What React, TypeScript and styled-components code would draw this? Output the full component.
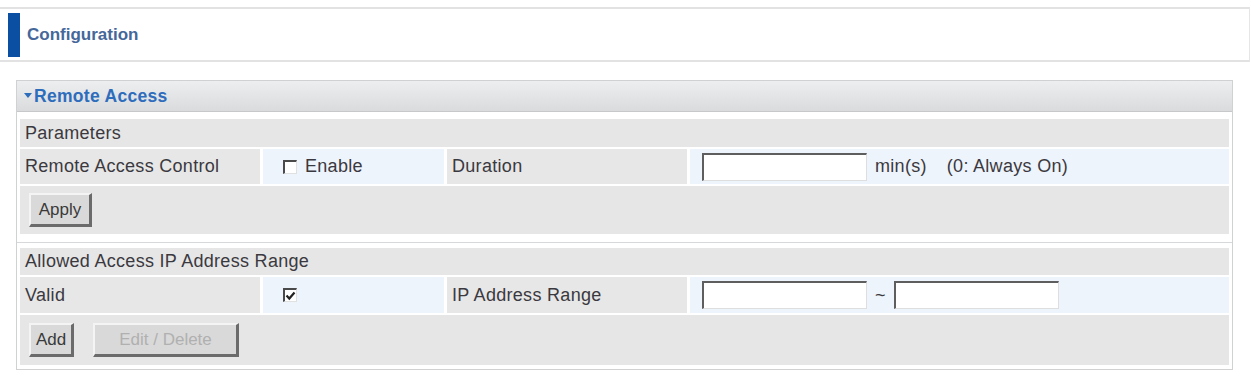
import React from "react";
import styled, { createGlobalStyle } from "styled-components";

const Global = createGlobalStyle`
  html, body { margin: 0; padding: 0; background: #ffffff; }
  body { font-family: "Liberation Sans", Arial, sans-serif; color: #3b3940; }
`;

const Page = styled.div`
  width: 1251px;
  height: 384px;
  padding-top: 7px;
  box-sizing: border-box;
  overflow: hidden;
`;

const Header = styled.div`
  height: 55px;
  box-sizing: border-box;
  margin-right: 1px;
  border-top: 2px solid #e2e2e2;
  border-bottom: 2px solid #e2e2e2;
  border-right: 1px solid #e6e6e6;
  display: flex;
  align-items: center;
  gap: 7px;
  padding-left: 8px;
`;

const BlueBar = styled.div`
  width: 12px;
  height: 44px;
  background: #0b4fa3;
`;

const HeaderTitle = styled.div`
  font-size: 17px;
  font-weight: bold;
  color: #45679a;
`;

const Panel = styled.div`
  margin: 18px 0 0 16px;
  width: 1217px;
  box-sizing: border-box;
  border: 1px solid #cfd1d3;
  background: #fff;
  display: flex;
  flex-direction: column;
`;

const TitleBar = styled.div`
  height: 31px;
  box-sizing: border-box;
  background: linear-gradient(#eceeef, #d9dbdd);
  border-bottom: 1px solid #c6c8ca;
  display: flex;
  align-items: center;
  gap: 2px;
  padding-left: 7px;
  font-size: 17.5px;
  font-weight: bold;
  letter-spacing: 0.3px;
  color: #2e6cbc;
`;

const Section = styled.div<{ $first?: boolean }>`
  margin-top: ${(p) => (p.$first ? "2px" : "4px")};
  border-top: ${(p) => (p.$first ? "none" : "1px solid #d6d8da")};
  padding: 5px 3px 4px 3px;
  display: flex;
  flex-direction: column;
  gap: 2px;
`;

const Band = styled.div<{ $h: number }>`
  height: ${(p) => p.$h}px;
  background: #e6e6e6;
  display: flex;
  align-items: center;
  padding-left: 5px;
  font-size: 18px;
  letter-spacing: 0.3px;
  color: #3b3940;
`;

const Row = styled.div<{ $h: number }>`
  height: ${(p) => p.$h}px;
  display: grid;
  grid-template-columns: 240px 181px 240px 1fr;
  column-gap: 3px;
  font-size: 18px;
  letter-spacing: 0.3px;
`;

const LabelCell = styled.div`
  background: #e7e7e7;
  display: flex;
  align-items: center;
  padding-left: 5px;
  color: #3b3940;
`;

const ValueCell = styled.div<{ $pad?: number }>`
  background: #eef4fb;
  display: flex;
  align-items: center;
  padding-left: ${(p) => p.$pad ?? 12}px;
  gap: 8px;
  color: #3b3940;
`;

const ButtonRow = styled.div<{ $h: number }>`
  height: ${(p) => p.$h}px;
  background: #e6e6e6;
  display: flex;
  align-items: center;
  padding-left: 9px;
  gap: 19px;
`;

const Button = styled.div<{ $w: number; $disabled?: boolean }>`
  width: ${(p) => p.$w}px;
  height: 34px;
  box-sizing: border-box;
  background: #d9d9d9;
  border-top: 2px solid #f4f4f4;
  border-left: 2px solid #f4f4f4;
  border-right: 3px solid #6b6b6b;
  border-bottom: 3px solid #6b6b6b;
  display: flex;
  align-items: center;
  justify-content: center;
  font-size: 17px;
  color: ${(p) => (p.$disabled ? "#b0b0b0" : "#3a3a3a")};
`;

const TextBox = styled.div<{ $w: number }>`
  width: ${(p) => p.$w}px;
  height: 28px;
  box-sizing: border-box;
  background: #fff;
  border-top: 2px solid #5e5e5e;
  border-left: 2px solid #5e5e5e;
  border-right: 1px solid #dedede;
  border-bottom: 1px solid #dedede;
`;

const Check = styled.div`
  width: 14px;
  height: 14px;
  box-sizing: border-box;
  background: #fff;
  border-top: 2px solid #4a4a4a;
  border-left: 2px solid #4a4a4a;
  border-right: 1px solid #e0e0e0;
  border-bottom: 1px solid #e0e0e0;
  display: flex;
  align-items: center;
  justify-content: center;
`;

const Note = styled.span<{ $ml?: number }>`
  margin-left: ${(p) => p.$ml ?? 0}px;
  color: #3b3940;
`;

const Arrow = () => (
  <svg width="8" height="6" viewBox="0 0 8 6">
    <path d="M0 0 L8 0 L4 5 Z" fill="#2e6cbc" />
  </svg>
);

const Tick = () => (
  <svg width="11" height="10" viewBox="0 0 11 10">
    <path d="M1.5 4.5 L4.3 7.5 L9.5 1.5" stroke="#222" strokeWidth="2.2" fill="none" />
  </svg>
);

export default function App() {
  return (
    <Page>
      <Global />
      <Header>
        <BlueBar />
        <HeaderTitle>Configuration</HeaderTitle>
      </Header>
      <Panel>
        <TitleBar>
          <Arrow />
          Remote Access
        </TitleBar>
        <Section $first>
          <Band $h={28}>Parameters</Band>
          <Row $h={35}>
            <LabelCell>Remote Access Control</LabelCell>
            <ValueCell $pad={20}>
              <Check />
              Enable
            </ValueCell>
            <LabelCell>Duration</LabelCell>
            <ValueCell $pad={12}>
              <TextBox $w={165} />
              <Note>min(s)</Note>
              <Note $ml={12}>(0: Always On)</Note>
            </ValueCell>
          </Row>
          <ButtonRow $h={48}>
            <Button $w={63}>Apply</Button>
          </ButtonRow>
        </Section>
        <Section>
          <Band $h={27}>Allowed Access IP Address Range</Band>
          <Row $h={36}>
            <LabelCell>Valid</LabelCell>
            <ValueCell $pad={20}>
              <Check>
                <Tick />
              </Check>
            </ValueCell>
            <LabelCell>IP Address Range</LabelCell>
            <ValueCell $pad={12}>
              <TextBox $w={165} />
              <Note>~</Note>
              <TextBox $w={165} />
            </ValueCell>
          </Row>
          <ButtonRow $h={50}>
            <Button $w={45}>Add</Button>
            <Button $w={146} $disabled>
              Edit / Delete
            </Button>
          </ButtonRow>
        </Section>
      </Panel>
    </Page>
  );
}
